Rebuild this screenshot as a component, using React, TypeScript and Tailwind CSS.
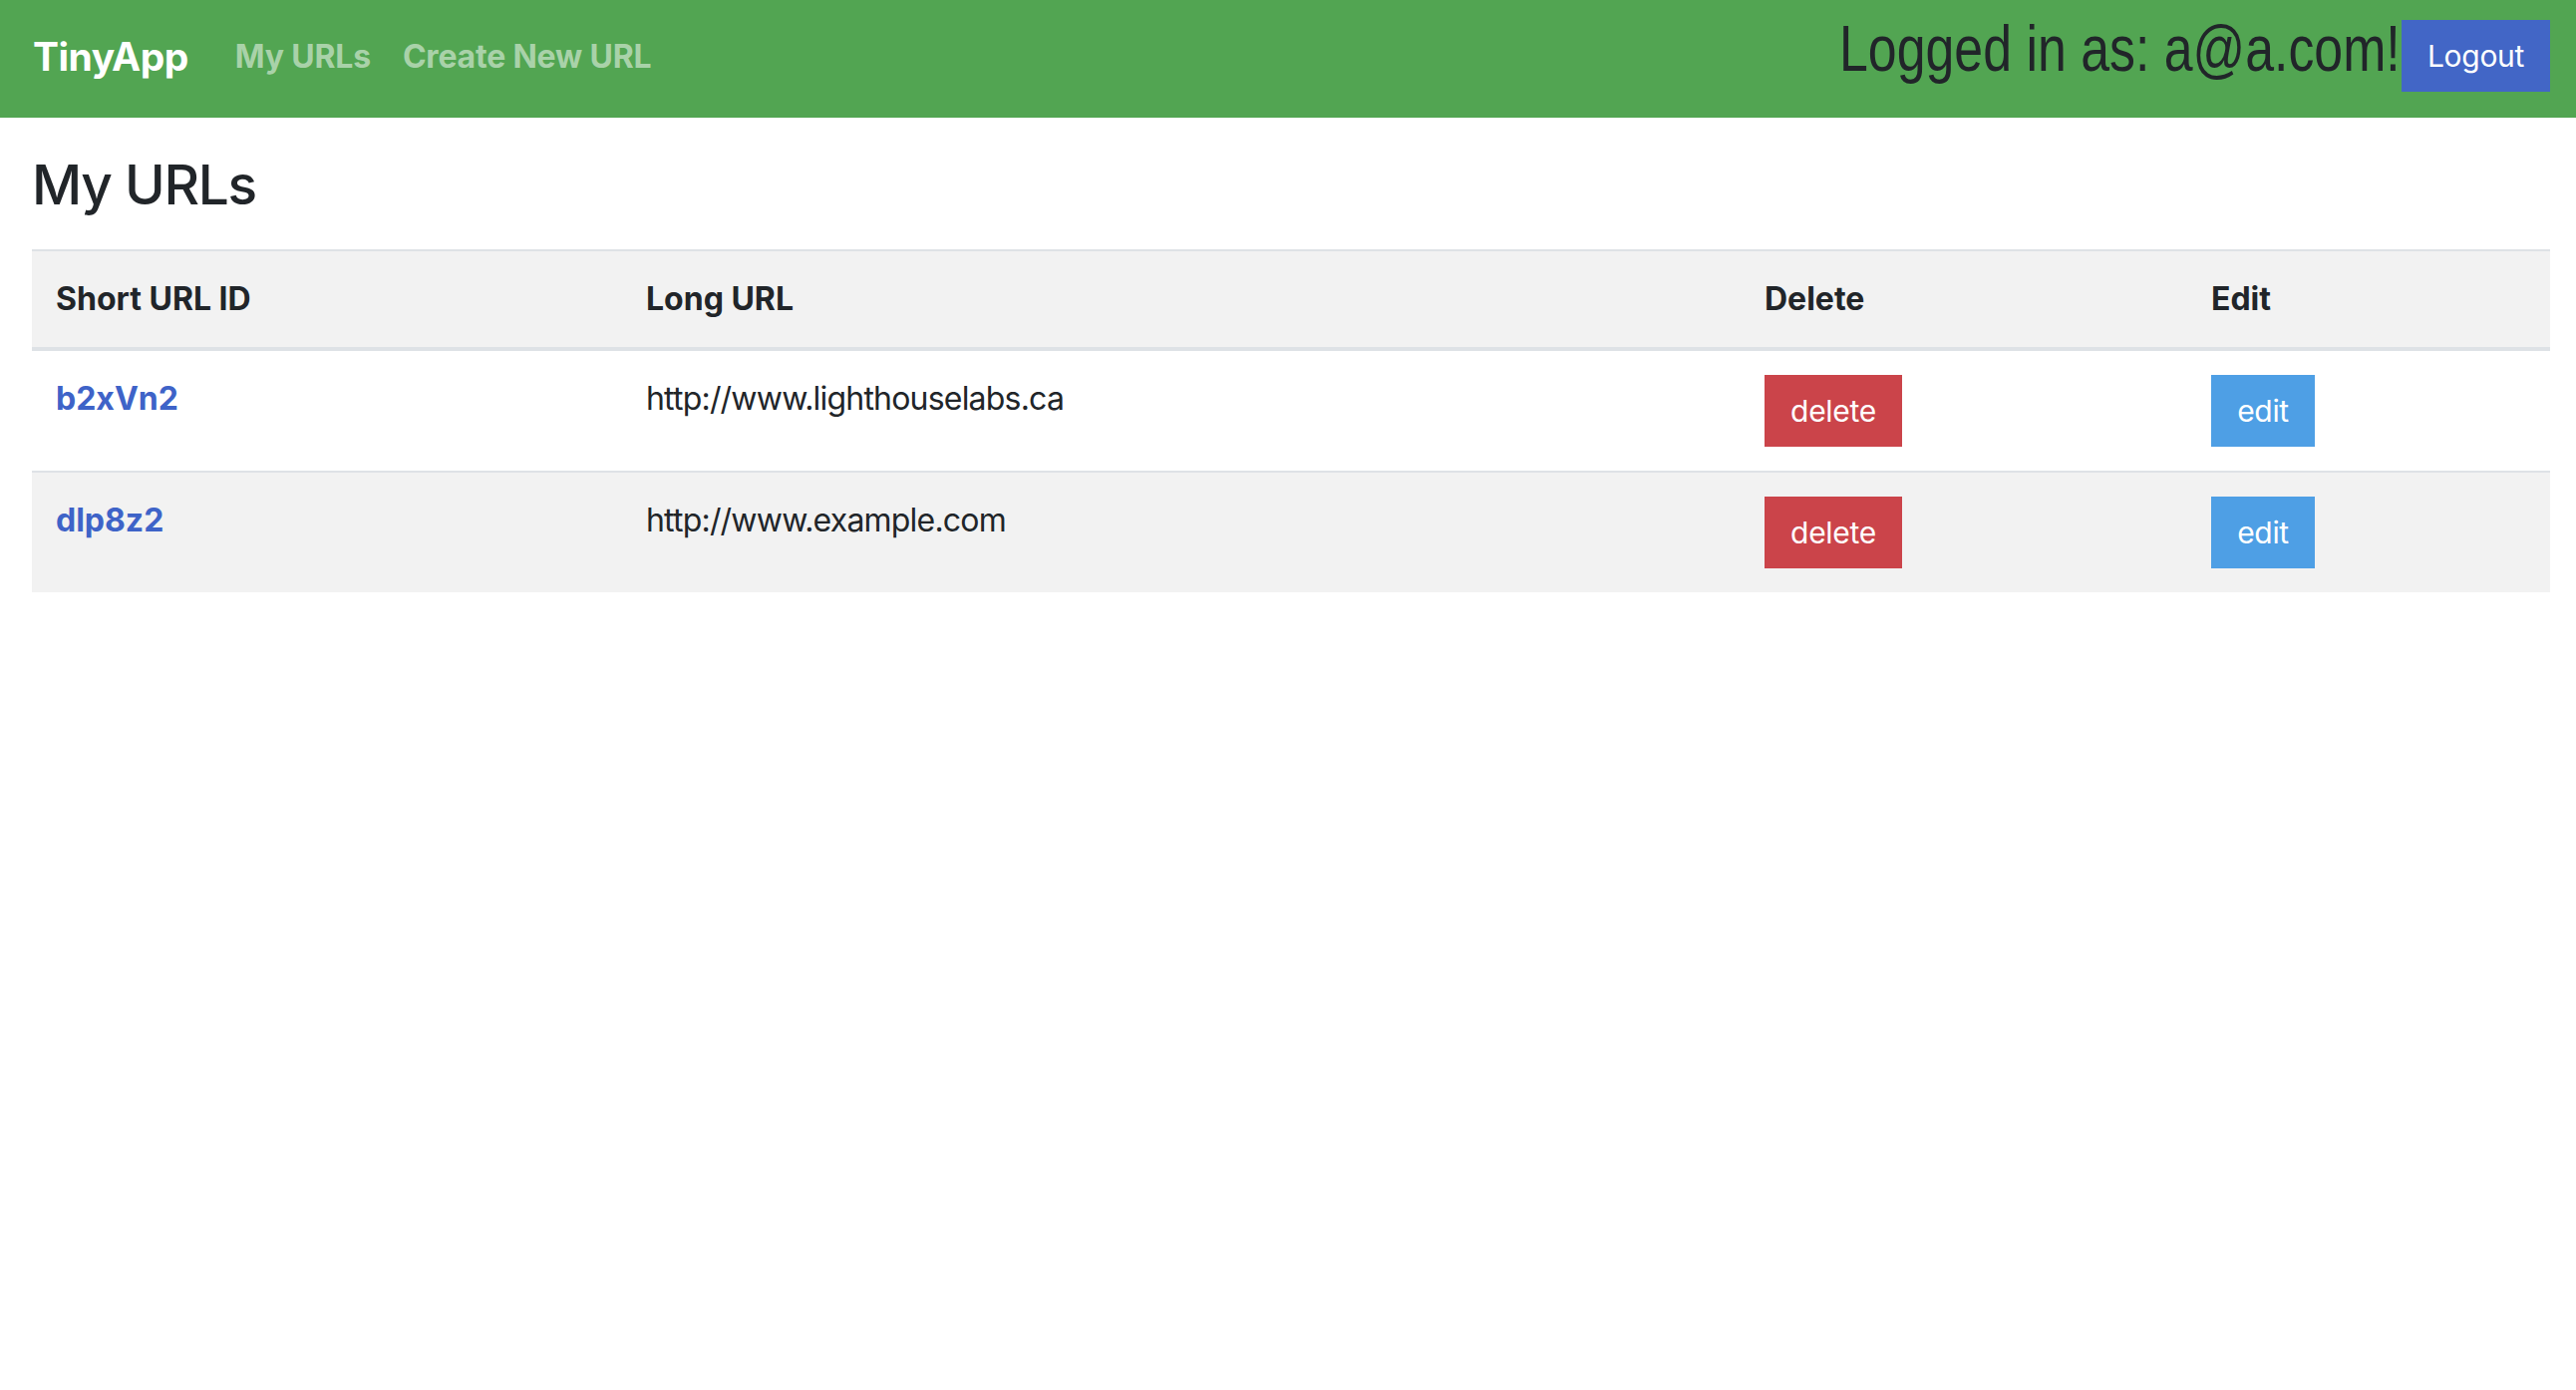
import React from "react";

const rows = [
  { id: "b2xVn2", url: "http://www.lighthouselabs.ca" },
  { id: "dlp8z2", url: "http://www.example.com" },
];

export default function App() {
  return (
    <div className="min-h-[1394px] bg-white text-[#212529]" style={{ fontFamily: "Inter, 'Noto Sans', sans-serif" }}>
      <nav className="flex h-[118px] items-start justify-between bg-[#52a552] pl-[33px] pr-[26px]">
        <div className="flex h-[118px] items-center pb-[5px]">
          <span className="text-[39px] font-bold leading-none tracking-[-0.5px] text-white">TinyApp</span>
          <a className="ml-[47px] text-[32px] font-bold leading-none tracking-[-0.2px] text-[#a9d2a9]">My URLs</a>
          <a className="ml-[32px] text-[32px] font-bold leading-none tracking-[-0.2px] text-[#a9d2a9]">Create New URL</a>
        </div>
        <div className="flex items-start">
          <div className="mt-[17px] w-[564px] overflow-visible">
            <span
              className="inline-block origin-left scale-x-[0.81] whitespace-nowrap text-[64px] leading-[64px] text-[#212529]"
              style={{ fontFamily: "'Liberation Sans', Arial, sans-serif" }}
            >
              Logged in as: a@a.com!
            </span>
          </div>
          <button className="mt-[20px] flex h-[72px] w-[149px] items-center justify-center bg-[#4266c6] text-[30px] leading-none tracking-[-0.3px] text-white">
            Logout
          </button>
        </div>
      </nav>

      <main className="pl-[32px] pr-[26px]">
        <h2 className="mt-[34px] text-[55px] font-medium leading-[1.2] tracking-[-1.3px]">My URLs</h2>
        <table className="mt-[32px] w-full table-fixed border-collapse text-left text-[32px] leading-[48px]">
          <thead>
            <tr className="border-t-2 border-b-4 border-[#dee2e6] bg-[#f2f2f2]">
              <th className="w-[592px] px-6 py-6 align-top font-bold">Short URL ID</th>
              <th className="w-[1122px] px-6 py-6 align-top font-bold">Long URL</th>
              <th className="w-[448px] px-6 py-6 align-top font-bold">Delete</th>
              <th className="px-6 py-6 align-top font-bold">Edit</th>
            </tr>
          </thead>
          <tbody>
            {rows.map((r, i) => (
              <tr key={r.id} className={i % 2 === 1 ? "border-t-2 border-[#dee2e6] bg-[#f2f2f2]" : "bg-white"}>
                <td className={i === 0 ? "px-6 pt-6 pb-6 align-top" : "px-6 pt-6 pb-[23px] align-top"}>
                  <a className="font-bold text-[#3e63c8]">{r.id}</a>
                </td>
                <td className="px-6 py-6 align-top tracking-[-0.8px]">{r.url}</td>
                <td className="px-6 py-6 align-top">
                  <button className="flex h-[72px] w-[138px] items-center justify-center bg-[#cb444a] text-[30px] leading-none tracking-[-0.3px] text-white">
                    delete
                  </button>
                </td>
                <td className="px-6 py-6 align-top">
                  <button className="flex h-[72px] w-[104px] items-center justify-center bg-[#4e9fe5] text-[30px] leading-none tracking-[-0.3px] text-white">
                    edit
                  </button>
                </td>
              </tr>
            ))}
          </tbody>
        </table>
      </main>
    </div>
  );
}
